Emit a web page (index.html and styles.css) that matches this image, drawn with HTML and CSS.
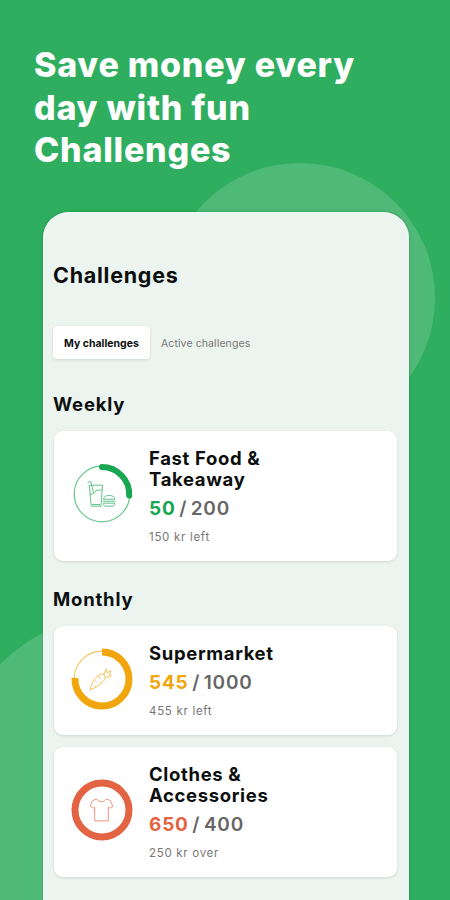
FILE: index.html
```html
<!DOCTYPE html>
<html lang="en">
<head>
    <meta charset="UTF-8">
    <meta name="viewport" content="width=device-width, initial-scale=1.0">
    <title>Challenges</title>
    <link rel="stylesheet" href="styles.css">
</head>
<body>
    <div class="promo">
        <div class="bubble bubble-right"></div>
        <div class="bubble bubble-left"></div>
        <h1>Save money every<br>day with fun<br>Challenges</h1>
        <div class="phone">
            <h2>Challenges</h2>
            <div class="tabs">
                <button class="tab active">My challenges</button>
                <button class="tab">Active challenges</button>
            </div>

            <h3>Weekly</h3>
            <div class="card green">
                <svg class="ring" viewBox="0 0 62 62">
                    <circle class="track" cx="31" cy="31" r="27.8"/>
                    <path class="progress round" d="M31 4a27.3 27.3 0 0 1 27.2 28.5"/>
                    <g class="icon">
                        <path d="M18.3 22.2h13.2l-1.5 21h-9.8z"/>
                        <path d="M22.5 29.5l-2.8-11-3.2 1"/>
                        <path d="M19 31.5l4-1 2-3 5.8-.7M21 41.5h8"/>
                        <path d="M32.5 36.2c0-5 11.3-5 11.3 0zM31.8 38.2h12.6M32.5 40.2h11.4c0 2-.8 3-2.4 3h-6.6c-1.6 0-2.4-1-2.4-3z"/>
                    </g>
                </svg>
                <div class="info">
                    <h4>Fast Food &amp;<br>Takeaway</h4>
                    <p class="amount"><span>50</span> / 200</p>
                    <p class="note">150 kr left</p>
                </div>
            </div>

            <h3>Monthly</h3>
            <div class="card yellow">
                <svg class="ring" viewBox="0 0 62 62">
                    <circle class="track" cx="31" cy="31" r="27.8"/>
                    <path class="progress" d="M31 4a27 27 0 1 1-27 26"/>
                    <g class="icon">
                        <path d="M19.2 41.8c1-5.5 3.5-10.5 8-14.3 2-1.7 4.5-2 6-.4 1.6 1.7 1.2 4-.6 5.9-3.6 4-8 6.8-13.4 8.8z"/>
                        <path d="M33.2 27c-.3-2.5.5-4 2-6l.6 3.6 4.2-1.6-2 3.6 2.4.9c-2 1.7-4.2 2.2-6.4 1.2"/>
                        <path d="M27 28l2.5 3M23.8 32.5l2 2M30.5 34.8l-1.7-1.5M25 39l-1.5-1.6"/>
                    </g>
                </svg>
                <div class="info">
                    <h4>Supermarket</h4>
                    <p class="amount"><span>545</span> / 1000</p>
                    <p class="note">455 kr left</p>
                </div>
            </div>
            <div class="card red">
                <svg class="ring" viewBox="0 0 62 62">
                    <circle class="progress" cx="31" cy="31" r="27"/>
                    <g class="icon">
                        <path d="M25.7 20l-4.2 1.6-2.3 5.9 3.3 1.6 1.2-.8v13.6h13.6V28.3l1.2.8 3.3-1.6-2.3-5.9-4.2-1.6c-1.6 3.6-8 3.6-9.6 0z"/>
                    </g>
                </svg>
                <div class="info">
                    <h4>Clothes &amp;<br>Accessories</h4>
                    <p class="amount"><span>650</span> / 400</p>
                    <p class="note">250 kr over</p>
                </div>
            </div>
        </div>
    </div>
</body>
</html>
```

FILE: styles.css
```css
:root {
    --green: #2fae60;
    --panel: #ebf4ef;
    --text: #0c0f0e;
    --muted: #666;
}
* {
    box-sizing: border-box;
}
body {
    margin: 0;
    font-family: Inter, 'Liberation Sans', sans-serif;
    color: var(--text);
}
h1, h2, h3, h4, p {
    margin: 0;
}
.promo {
    position: relative;
    height: 900px;
    padding: 44px 41px 0 43px;
    overflow: hidden;
    background-color: var(--green);
}
.bubble {
    position: absolute;
    border-radius: 50%;
    background-color: #4fba78;
}
.bubble-right {
    top: 163px;
    left: 165px;
    width: 270px;
    height: 270px;
}
.bubble-left {
    top: 612px;
    left: -53px;
    width: 360px;
    height: 360px;
}
h1 {
    position: relative;
    height: 168px;
    margin-left: -9px;
    color: #fff;
    font-size: 34px;
    font-weight: 800;
    letter-spacing: 0.75px;
    line-height: 42.5px;
    white-space: nowrap;
}
.phone {
    position: relative;
    height: 720px;
    padding: 49px 12px 0 11px;
    border-radius: 26px;
    background-color: var(--panel);
    box-shadow: 0 0 3px rgba(0, 90, 40, 0.4), inset 0 0 3px #fff;
}
h2 {
    margin-left: -1px;
    font-size: 21.5px;
    font-weight: 700;
    letter-spacing: 0.75px;
    line-height: 28px;
}
.tabs {
    display: flex;
    margin: 37px 0 32px -1px;
}
.tab {
    height: 33px;
    padding: 1px 11px 0;
    border: none;
    border-radius: 4px;
    background: none;
    color: #777;
    font-family: inherit;
    font-size: 10.5px;
    letter-spacing: 0.1px;
    white-space: nowrap;
}
.tab.active {
    width: 97px;
    background-color: #fff;
    color: var(--text);
    font-weight: 700;
    letter-spacing: 0;
    box-shadow: 0 1px 3px rgba(0, 0, 0, 0.12);
}
h3 {
    margin: 0 0 14px -1px;
    font-size: 18.5px;
    font-weight: 700;
    letter-spacing: 0.8px;
    line-height: 26px;
}
.card {
    display: flex;
    align-items: center;
    height: 130px;
    margin-bottom: 25px;
    padding-left: 17px;
    border-radius: 9px;
    background-color: #fff;
    box-shadow: 0 1px 3px rgba(0, 0, 0, 0.12);
}
.card.yellow {
    height: 109px;
    margin-bottom: 12px;
}
.green {
    --accent: #18a651;
}
.yellow {
    --accent: #f2a60d;
}
.red {
    --accent: #e36442;
}
.ring {
    flex: none;
    width: 62px;
    height: 62px;
    margin: 0 16px 4px 0;
    fill: none;
    stroke: var(--accent);
}
.yellow .ring {
    margin-bottom: 3px;
}
.track {
    stroke-width: 1.2;
    opacity: 0.65;
}
.progress {
    stroke-width: 7;
}
.progress.round {
    stroke-width: 6;
    stroke-linecap: round;
}
.icon {
    stroke-width: 0.9;
    stroke-linejoin: round;
    opacity: 0.75;
}
.info {
    padding-top: 2px;
}
h4 {
    font-size: 18.5px;
    font-weight: 700;
    letter-spacing: 0.65px;
    line-height: 20.5px;
}
.amount {
    margin-top: 6px;
    color: var(--muted);
    font-size: 19px;
    font-weight: 600;
    letter-spacing: 0.8px;
    word-spacing: -2px;
    line-height: 28px;
}
.amount span {
    color: var(--accent);
    font-weight: 700;
}
.note {
    margin-top: 5px;
    color: #777;
    font-size: 11.5px;
    letter-spacing: 0.7px;
    line-height: 18px;
}
```
